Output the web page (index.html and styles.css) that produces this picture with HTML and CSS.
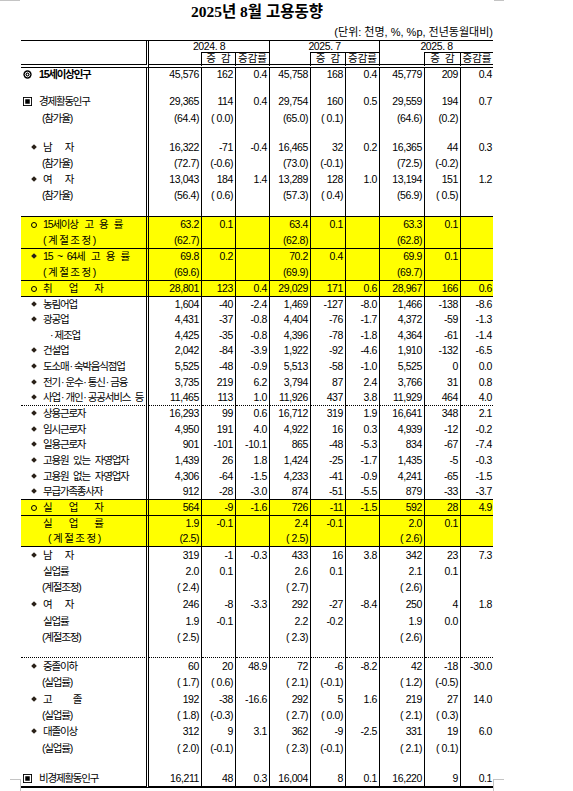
FILE: index.html
```html
<!DOCTYPE html>
<html lang="ko">
<head>
<meta charset="utf-8">
<title>2025년 8월 고용동향</title>
<link rel="stylesheet" href="styles.css">
</head>
<body>
<div class="page">
  <span class="mark mk-tl"></span>
  <span class="mark mk-tr"></span>
  <span class="mark mk-bl-h"></span>
  <span class="mark mk-bl-v"></span>
  <span class="mark mk-br-h"></span>
  <span class="mark mk-br-v"></span>
  <div class="sheet">
    <h1 class="title">2025년 8월 고용동향</h1>
    <div class="unit">(단위: 천명, %, %p, 전년동월대비)</div>
    <table class="stats">
      <colgroup>
        <col class="c-lab"><col class="c-a"><col class="c-b"><col class="c-c">
        <col class="c-d"><col class="c-e"><col class="c-f">
        <col class="c-g"><col class="c-h"><col class="c-i">
      </colgroup>
      <thead>
        <tr class="hr1">
          <th class="hlab" rowspan="2"></th>
          <th class="hg" colspan="3">2024. 8</th>
          <th class="hg" colspan="3">2025. 7</th>
          <th class="hg last" colspan="3">2025. 8</th>
        </tr>
        <tr class="hr2">
          <th class="hs0"></th><th class="hs"><span class="s5">증감</span></th><th class="hs">증감률</th>
          <th class="hs0"></th><th class="hs"><span class="s5">증감</span></th><th class="hs">증감률</th>
          <th class="hs0"></th><th class="hs"><span class="s5">증감</span></th><th class="hs last">증감률</th>
        </tr>
      </thead>
      <tbody>
        <tr class="h13">
          <td class="lab b"><svg class="ic" viewBox="0 0 10 10"><circle cx="5" cy="5" r="4.6" fill="#000"/><circle cx="5" cy="5" r="2.6" fill="none" stroke="#fff" stroke-width="1"/><circle cx="5" cy="5" r="1" fill="#fff"/></svg>15세이상인구</td>
          <td>45,576</td><td>162</td><td>0.4</td><td>45,758</td><td>168</td><td>0.4</td><td>45,779</td><td>209</td><td>0.4</td>
        </tr>
        <tr class="h12"><td class="lab"></td><td></td><td></td><td></td><td></td><td></td><td></td><td></td><td></td><td></td></tr>
        <tr class="h17">
          <td class="lab"><svg class="ic" viewBox="0 0 10 10"><rect x="0.5" y="0.5" width="9" height="9" fill="none" stroke="#000" stroke-width="1"/><rect x="2.5" y="2.5" width="5" height="5" fill="#000"/></svg>경제활동인구</td>
          <td>29,365</td><td>114</td><td>0.4</td><td>29,754</td><td>160</td><td>0.5</td><td>29,559</td><td>194</td><td>0.7</td>
        </tr>
        <tr class="h17">
          <td class="lab p21">(참가율)</td>
          <td>(64.4)</td><td>( 0.0)</td><td></td><td>(65.0)</td><td>( 0.1)</td><td></td><td>(64.6)</td><td>(0.2)</td><td></td>
        </tr>
        <tr class="h12"><td class="lab"></td><td></td><td></td><td></td><td></td><td></td><td></td><td></td><td></td><td></td></tr>
        <tr class="h16">
          <td class="lab"><span class="bul"></span><span class="s12">남자</span></td>
          <td>16,322</td><td>-71</td><td>-0.4</td><td>16,465</td><td>32</td><td>0.2</td><td>16,365</td><td>44</td><td>0.3</td>
        </tr>
        <tr class="h16">
          <td class="lab p21">(참가율)</td>
          <td>(72.7)</td><td>(-0.6)</td><td></td><td>(73.0)</td><td>(-0.1)</td><td></td><td>(72.5)</td><td>(-0.2)</td><td></td>
        </tr>
        <tr class="h16">
          <td class="lab"><span class="bul"></span><span class="s12">여자</span></td>
          <td>13,043</td><td>184</td><td>1.4</td><td>13,289</td><td>128</td><td>1.0</td><td>13,194</td><td>151</td><td>1.2</td>
        </tr>
        <tr class="h16">
          <td class="lab p21">(참가율)</td>
          <td>(56.4)</td><td>( 0.6)</td><td></td><td>(57.3)</td><td>( 0.4)</td><td></td><td>(56.9)</td><td>( 0.5)</td><td></td>
        </tr>
        <tr class="h13"><td class="lab"></td><td></td><td></td><td></td><td></td><td></td><td></td><td></td><td></td><td></td></tr>

        <tr class="h16 y bt">
          <td class="lab"><span class="cir"></span>15세이상 <span class="sg">고용률</span></td>
          <td>63.2</td><td>0.1</td><td></td><td>63.4</td><td>0.1</td><td></td><td>63.3</td><td>0.1</td><td></td>
        </tr>
        <tr class="h16 y">
          <td class="lab p22"><span class="s2">(계절조정)</span></td>
          <td>(62.7)</td><td></td><td></td><td>(62.8)</td><td></td><td></td><td>(62.8)</td><td></td><td></td>
        </tr>
        <tr class="h16 y bt">
          <td class="lab"><span class="bul"></span>15 ~ 64세 <span class="sg">고용률</span></td>
          <td>69.8</td><td>0.2</td><td></td><td>70.2</td><td>0.4</td><td></td><td>69.9</td><td>0.1</td><td></td>
        </tr>
        <tr class="h16 y">
          <td class="lab p22"><span class="s2">(계절조정)</span></td>
          <td>(69.6)</td><td></td><td></td><td>(69.9)</td><td></td><td></td><td>(69.7)</td><td></td><td></td>
        </tr>
        <tr class="h16 y bt">
          <td class="lab"><span class="cir"></span><span class="s16">취업자</span></td>
          <td>28,801</td><td>123</td><td>0.4</td><td>29,029</td><td>171</td><td>0.6</td><td>28,967</td><td>166</td><td>0.6</td>
        </tr>

        <tr class="h16 bt">
          <td class="lab"><span class="bul"></span>농림어업</td>
          <td>1,604</td><td>-40</td><td>-2.4</td><td>1,469</td><td>-127</td><td>-8.0</td><td>1,466</td><td>-138</td><td>-8.6</td>
        </tr>
        <tr class="h15">
          <td class="lab"><span class="bul"></span>광공업</td>
          <td>4,431</td><td>-37</td><td>-0.8</td><td>4,404</td><td>-76</td><td>-1.7</td><td>4,372</td><td>-59</td><td>-1.3</td>
        </tr>
        <tr class="h16">
          <td class="lab p28"><span class="dot">·</span>제조업</td>
          <td>4,425</td><td>-35</td><td>-0.8</td><td>4,396</td><td>-78</td><td>-1.8</td><td>4,364</td><td>-61</td><td>-1.4</td>
        </tr>
        <tr class="h15">
          <td class="lab"><span class="bul"></span>건설업</td>
          <td>2,042</td><td>-84</td><td>-3.9</td><td>1,922</td><td>-92</td><td>-4.6</td><td>1,910</td><td>-132</td><td>-6.5</td>
        </tr>
        <tr class="h16">
          <td class="lab"><span class="bul"></span>도소매<span class="dot">·</span>숙박음식점업</td>
          <td>5,525</td><td>-48</td><td>-0.9</td><td>5,513</td><td>-58</td><td>-1.0</td><td>5,525</td><td>0</td><td>0.0</td>
        </tr>
        <tr class="h16">
          <td class="lab"><span class="bul"></span>전기<span class="dot">·</span>운수<span class="dot">·</span>통신<span class="dot">·</span>금융</td>
          <td>3,735</td><td>219</td><td>6.2</td><td>3,794</td><td>87</td><td>2.4</td><td>3,766</td><td>31</td><td>0.8</td>
        </tr>
        <tr class="h15">
          <td class="lab"><span class="bul"></span>사업<span class="dot">·</span>개인<span class="dot">·</span>공공서비스 등</td>
          <td>11,465</td><td>113</td><td>1.0</td><td>11,926</td><td>437</td><td>3.8</td><td>11,929</td><td>464</td><td>4.0</td>
        </tr>

        <tr class="h16 bd">
          <td class="lab"><span class="bul"></span>상용근로자</td>
          <td>16,293</td><td>99</td><td>0.6</td><td>16,712</td><td>319</td><td>1.9</td><td>16,641</td><td>348</td><td>2.1</td>
        </tr>
        <tr class="h16">
          <td class="lab"><span class="bul"></span>임시근로자</td>
          <td>4,950</td><td>191</td><td>4.0</td><td>4,922</td><td>16</td><td>0.3</td><td>4,939</td><td>-12</td><td>-0.2</td>
        </tr>
        <tr class="h15">
          <td class="lab"><span class="bul"></span>일용근로자</td>
          <td>901</td><td>-101</td><td>-10.1</td><td>865</td><td>-48</td><td>-5.3</td><td>834</td><td>-67</td><td>-7.4</td>
        </tr>
        <tr class="h16">
          <td class="lab"><span class="bul"></span>고용원 있는 자영업자</td>
          <td>1,439</td><td>26</td><td>1.8</td><td>1,424</td><td>-25</td><td>-1.7</td><td>1,435</td><td>-5</td><td>-0.3</td>
        </tr>
        <tr class="h16">
          <td class="lab"><span class="bul"></span>고용원 없는 자영업자</td>
          <td>4,306</td><td>-64</td><td>-1.5</td><td>4,233</td><td>-41</td><td>-0.9</td><td>4,241</td><td>-65</td><td>-1.5</td>
        </tr>
        <tr class="h15">
          <td class="lab"><span class="bul"></span>무급가족종사자</td>
          <td>912</td><td>-28</td><td>-3.0</td><td>874</td><td>-51</td><td>-5.5</td><td>879</td><td>-33</td><td>-3.7</td>
        </tr>

        <tr class="h16 y bt">
          <td class="lab"><span class="cir"></span><span class="s16">실업자</span></td>
          <td>564</td><td>-9</td><td>-1.6</td><td>726</td><td>-11</td><td>-1.5</td><td>592</td><td>28</td><td>4.9</td>
        </tr>
        <tr class="h15 y bt">
          <td class="lab p22"><span class="s16">실업률</span></td>
          <td>1.9</td><td>-0.1</td><td></td><td>2.4</td><td>-0.1</td><td></td><td>2.0</td><td>0.1</td><td></td>
        </tr>
        <tr class="h16 y">
          <td class="lab p27"><span class="s2">(계절조정)</span></td>
          <td>(2.5)</td><td></td><td></td><td>( 2.5)</td><td></td><td></td><td>( 2.6)</td><td></td><td></td>
        </tr>

        <tr class="h17 bt">
          <td class="lab"><span class="bul"></span><span class="s12">남자</span></td>
          <td>319</td><td>-1</td><td>-0.3</td><td>433</td><td>16</td><td>3.8</td><td>342</td><td>23</td><td>7.3</td>
        </tr>
        <tr class="h16">
          <td class="lab p22">실업률</td>
          <td>2.0</td><td>0.1</td><td></td><td>2.6</td><td>0.1</td><td></td><td>2.1</td><td>0.1</td><td></td>
        </tr>
        <tr class="h17">
          <td class="lab p21">(계절조정)</td>
          <td>( 2.4)</td><td></td><td></td><td>( 2.7)</td><td></td><td></td><td>( 2.6)</td><td></td><td></td>
        </tr>
        <tr class="h17">
          <td class="lab"><span class="bul"></span><span class="s12">여자</span></td>
          <td>246</td><td>-8</td><td>-3.3</td><td>292</td><td>-27</td><td>-8.4</td><td>250</td><td>4</td><td>1.8</td>
        </tr>
        <tr class="h16">
          <td class="lab p22">실업률</td>
          <td>1.9</td><td>-0.1</td><td></td><td>2.2</td><td>-0.2</td><td></td><td>1.9</td><td>0.0</td><td></td>
        </tr>
        <tr class="h16">
          <td class="lab p21">(계절조정)</td>
          <td>( 2.5)</td><td></td><td></td><td>( 2.3)</td><td></td><td></td><td>( 2.6)</td><td></td><td></td>
        </tr>
        <tr class="h12"><td class="lab"></td><td></td><td></td><td></td><td></td><td></td><td></td><td></td><td></td><td></td></tr>

        <tr class="h17 bd">
          <td class="lab"><span class="bul"></span>중졸이하</td>
          <td>60</td><td>20</td><td>48.9</td><td>72</td><td>-6</td><td>-8.2</td><td>42</td><td>-18</td><td>-30.0</td>
        </tr>
        <tr class="h17">
          <td class="lab p21">(실업률)</td>
          <td>( 1.7)</td><td>( 0.6)</td><td></td><td>( 2.1)</td><td>(-0.1)</td><td></td><td>( 1.2)</td><td>(-0.5)</td><td></td>
        </tr>
        <tr class="h16">
          <td class="lab"><span class="bul"></span><span class="s20">고졸</span></td>
          <td>192</td><td>-38</td><td>-16.6</td><td>292</td><td>5</td><td>1.6</td><td>219</td><td>27</td><td>14.0</td>
        </tr>
        <tr class="h16">
          <td class="lab p21">(실업률)</td>
          <td>( 1.8)</td><td>(-0.3)</td><td></td><td>( 2.7)</td><td>( 0.0)</td><td></td><td>( 2.1)</td><td>( 0.3)</td><td></td>
        </tr>
        <tr class="h17">
          <td class="lab"><span class="bul"></span>대졸이상</td>
          <td>312</td><td>9</td><td>3.1</td><td>362</td><td>-9</td><td>-2.5</td><td>331</td><td>19</td><td>6.0</td>
        </tr>
        <tr class="h17">
          <td class="lab p21">(실업률)</td>
          <td>( 2.0)</td><td>(-0.1)</td><td></td><td>( 2.3)</td><td>(-0.1)</td><td></td><td>( 2.1)</td><td>( 0.1)</td><td></td>
        </tr>
        <tr class="h13"><td class="lab"></td><td></td><td></td><td></td><td></td><td></td><td></td><td></td><td></td><td></td></tr>

        <tr class="h18 bb">
          <td class="lab"><svg class="ic" viewBox="0 0 10 10"><rect x="0.5" y="0.5" width="9" height="9" fill="none" stroke="#000" stroke-width="1"/><rect x="2.5" y="2.5" width="5" height="5" fill="#000"/></svg>비경제활동인구</td>
          <td>16,211</td><td>48</td><td>0.3</td><td>16,004</td><td>8</td><td>0.1</td><td>16,220</td><td>9</td><td>0.1</td>
        </tr>
      </tbody>
    </table>
  </div>
</div>
</body>
</html>
```

FILE: styles.css
```css
html, body {
  margin: 0;
  padding: 0;
  background: #fff;
}
body {
  font-family: "Liberation Sans", "Noto Sans CJK KR", sans-serif;
  color: #000;
}
.page {
  position: relative;
  width: 573px;
  height: 791px;
  overflow: hidden;
}
.sheet {
  margin-left: 21px;
  width: 472px;
}
.title {
  margin: 0;
  height: 24px;
  font: bold 15.5px/24px "Liberation Serif", "Noto Sans CJK KR", serif;
  text-align: center;
  letter-spacing: 0;
}
.unit {
  height: 16px;
  line-height: 16px;
  font-size: 11px;
  letter-spacing: 0;
  text-align: right;
  white-space: nowrap;
}

/* table */
.stats {
  width: 472px;
  table-layout: fixed;
  border-collapse: separate;
  border-spacing: 0;
  font-size: 10.5px;
  letter-spacing: -0.4px;
}
.c-lab { width: 128px; }
.c-a { width: 53px; }
.c-b { width: 34px; }
.c-c { width: 34px; }
.c-d { width: 41px; }
.c-e { width: 35px; }
.c-f { width: 34px; }
.c-g { width: 45px; }
.c-h { width: 36px; }
.c-i { width: 32px; }

.stats th {
  padding: 0;
  font-weight: normal;
  line-height: 11px;
  text-align: center;
  white-space: nowrap;
}
.hr1 { height: 12px; }
.hr2 { height: 16px; }
.hr1 th {
  border-top: 1px solid #000;
}
.hlab {
  border-right: 3px double #000;
  border-bottom: 4px double #000;
}
.hg {
  border-right: 1px solid #000;
}
.hg.last { border-right: 0; }
.hr2 th {
  border-bottom: 4px double #000;
  border-right: 1px solid #000;
}
.hr2 .hs {
  border-top: 1px solid #000;
  letter-spacing: 0;
}
.hr2 th.last { border-right: 0; }
.s5 { letter-spacing: 5px; margin-right: -5px; }

.stats td {
  padding: 0 2px 0 0;
  line-height: 11px;
  text-align: right;
  white-space: nowrap;
  border-right: 1px solid #000;
  overflow: hidden;
}
.stats td:last-child {
  border-right: 0;
  padding-right: 1px;
}
.stats td.lab {
  text-align: left;
  padding: 0;
  border-right: 3px double #000;
  font-size: 10.5px;
  letter-spacing: -1.2px;
  word-spacing: 3px;
  overflow: hidden;
}
.lab.b { font-weight: bold; letter-spacing: -1px; }
.p21 { padding-left: 21px !important; }
.p22 { padding-left: 22px !important; }
.p27 { padding-left: 27px !important; }
.p28 { padding-left: 28px !important; }
.dot { letter-spacing: 0; margin: 0 1px 0 1px; }

.h12 { height: 12px; }
.h13 { height: 13px; }
.h15 { height: 15px; }
.h16 { height: 16px; }
.h17 { height: 17px; }
.h18 { height: 18px; }

.y td { background: #ffff00; }
.bt td { border-top: 1px solid #000; }
.bd td { border-top: 1px dotted #000; }
.bb td { border-bottom: 2px solid #000; }

.ic {
  display: inline-block;
  width: 9px;
  height: 9px;
  margin: 0 7px 0 2px;
  vertical-align: -1px;
}
.bul {
  display: inline-block;
  width: 4px;
  height: 4px;
  background: #2a2118;
  transform: rotate(45deg);
  margin: 0 7px 2px 11px;
  vertical-align: middle;
}
.cir {
  display: inline-block;
  width: 4px;
  height: 4px;
  border: 1px solid #000;
  border-radius: 50%;
  margin: 0 6px 1px 10px;
  vertical-align: middle;
}
.s2 { letter-spacing: 1.5px; }
.s12 { letter-spacing: 12px; }
.s16 { letter-spacing: 16px; }
.s20 { letter-spacing: 20px; }
.sg { letter-spacing: 5px; margin-left: 2px; }

/* HWP page corner marks */
.mark {
  position: absolute;
  background: #c4c4c4;
}
.mk-tl { left: 0; top: 0; width: 20px; height: 1px; }
.mk-tr { left: 494px; top: 0; width: 10px; height: 1px; }
.mk-bl-h { left: 10px; top: 779px; width: 11px; height: 1px; }
.mk-bl-v { left: 20px; top: 779px; width: 1px; height: 12px; }
.mk-br-h { left: 494px; top: 779px; width: 10px; height: 1px; }
.mk-br-v { left: 493px; top: 779px; width: 1px; height: 12px; }
```
